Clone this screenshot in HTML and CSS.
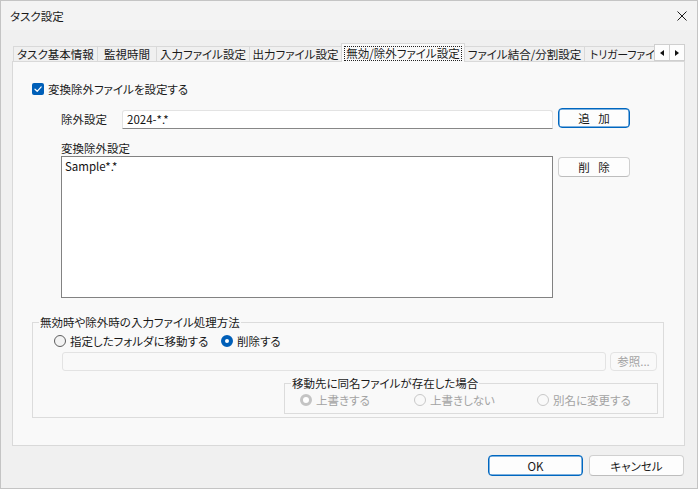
FILE: index.html
```html
<!DOCTYPE html>
<html lang="ja">
  <head>
    <meta charset="UTF-8" />
    <title>タスク設定</title>
    <link rel="stylesheet" href="styles.css">
  </head>
  <body>
    <div class="window">
      <div class="titlebar">
        <span class="title">タスク設定</span>
        <svg class="close" viewBox="0 0 10 10" width="10" height="10">
          <path d="M0.5 0.5 L9.5 9.5 M9.5 0.5 L0.5 9.5" stroke="#1a1a1a" stroke-width="1" fill="none" />
        </svg>
      </div>
      <div class="content">
        <div class="tabs">
          <div class="tabstrip">
            <div class="tab" style="width: 85px">タスク基本情報</div>
            <div class="tab" style="width: 60px">監視時間</div>
            <div class="tab" style="width: 94px">入力ファイル設定</div>
            <div class="tab" style="width: 93px">出力ファイル設定</div>
            <div class="tab active" style="width: 124px"><span class="focus">無効/除外ファイル設定</span></div>
            <div class="tab" style="width: 121px">ファイル結合/分割設定</div>
            <div class="tab last">トリガーファイ</div>
          </div>
          <div class="tab-scroll">
            <span class="arrow">
              <svg viewBox="0 0 4 6" width="4" height="6"><path d="M4 0 L0 3 L4 6 Z" fill="#111" /></svg>
            </span>
            <span class="arrow">
              <svg viewBox="0 0 4 6" width="4" height="6"><path d="M0 0 L4 3 L0 6 Z" fill="#111" /></svg>
            </span>
          </div>
        </div>

        <div class="panel">
          <label class="check-row">
            <span class="checkbox">
              <svg viewBox="0 0 12 12" width="12" height="12">
                <path d="M3 6.2 L5.2 8.3 L9.2 3.9" stroke="#fff" stroke-width="1.2" fill="none" stroke-linecap="round" stroke-linejoin="round" />
              </svg>
            </span>
            変換除外ファイルを設定する
          </label>

          <div class="indent">
            <div class="field-row">
              <span class="field-label">除外設定</span>
              <div class="textbox">2024-*.*</div>
              <button type="button" class="btn default side">追&nbsp;加</button>
            </div>

            <div class="list-label">変換除外設定</div>
            <div class="list-row">
              <div class="listbox">Sample*.*</div>
              <button type="button" class="btn side del">削&nbsp;除</button>
            </div>
          </div>

          <fieldset class="group outer">
            <legend>無効時や除外時の入力ファイル処理方法</legend>
            <div class="radio-row">
              <span class="radio-item first"><span class="radio"></span>指定したフォルダに移動する</span>
              <span class="radio-item"><span class="radio checked"></span>削除する</span>
            </div>
            <div class="folder-row">
              <div class="textbox disabled"></div>
              <button type="button" class="btn browse" disabled>参照...</button>
            </div>
            <fieldset class="group inner">
              <legend>移動先に同名ファイルが存在した場合</legend>
              <div class="radio-row small">
                <span class="radio-item w1 off"><span class="radio checked off"></span>上書きする</span>
                <span class="radio-item w2 off"><span class="radio off"></span>上書きしない</span>
                <span class="radio-item off"><span class="radio off"></span>別名に変更する</span>
              </div>
            </fieldset>
          </fieldset>
        </div>

        <div class="footer">
          <button type="button" class="btn default wide">OK</button>
          <button type="button" class="btn wide">キャンセル</button>
        </div>
      </div>
    </div>
  </body>
</html>
```

FILE: styles.css
```css
:root {
  --accent: #005fb8;
  --line: #d9d9d9;
  --panel: #f9f9f9;
  --disabled: #a3a3a3;
}

* {
  box-sizing: border-box;
}

body {
  margin: 0;
  font-family: "Noto Sans CJK JP", "Noto Sans", sans-serif;
  font-size: 11.5px;
  font-feature-settings: "palt";
  color: #1a1a1a;
}

.window {
  width: 698px;
  height: 489px;
  border: 1px solid #c4c4c4;
  background: #f0f0f0;
  display: flex;
  flex-direction: column;
}

.titlebar {
  height: 29px;
  background: #f3f3f3;
  display: flex;
  align-items: center;
  padding: 0 10px 0 9px;
}

.title {
  flex: 1;
  line-height: 16px;
}

.close {
  display: block;
  margin-top: 1px;
}

.content {
  padding: 13px 12px 0 11px;
}

/* タブ */
.tabs {
  display: flex;
  align-items: flex-end;
  height: 18px;
  padding-left: 1px;
}

.tabstrip {
  width: 641px;
  display: flex;
  align-items: flex-end;
  overflow: hidden;
  height: 19px;
  align-self: flex-start;
}

.tab {
  flex: none;
  height: 16px;
  line-height: 15px;
  text-align: center;
  white-space: nowrap;
  border: 1px solid var(--line);
  border-bottom: none;
  margin-right: -1px;
  background: #f0f0f0;
  overflow: hidden;
}

.tab.last {
  flex: 1;
  text-align: left;
  padding-left: 5px;
  border-right: none;
  font-size: 11px;
  letter-spacing: -0.2px;
}

.tab.active {
  height: 19px;
  background: var(--panel);
  position: relative;
  z-index: 2;
  padding: 2px 2px 0;
  line-height: 14px;
}

.focus {
  display: block;
  border: 1px dotted #222;
  height: 15px;
  line-height: 13px;
}

.tab-scroll {
  width: 31px;
  height: 17px;
  display: flex;
  border: 1px solid #cfcfcf;
  background: #fdfdfd;
}

.arrow {
  flex: 1;
  display: flex;
  align-items: center;
  justify-content: center;
}

.arrow + .arrow {
  border-left: 1px solid #cfcfcf;
}

.arrow svg {
  display: block;
}

/* パネル */
.panel {
  height: 385px;
  border: 1px solid var(--line);
  background: var(--panel);
  padding-left: 19px;
  position: relative;
  z-index: 1;
}

.check-row {
  display: flex;
  align-items: center;
  gap: 4px;
  margin-top: 19px;
  line-height: 16px;
  height: 16px;
}

.checkbox {
  width: 12px;
  height: 12px;
  border-radius: 2px;
  background: var(--accent);
  display: block;
}

.checkbox svg {
  display: block;
}

.indent {
  margin-left: 29px;
}

.field-row {
  display: flex;
  align-items: flex-start;
  margin-top: 11px;
}

.field-label {
  width: 61px;
  margin-top: 2px;
  line-height: 19px;
}

.textbox {
  width: 431px;
  height: 19px;
  margin-top: 2px;
  background: #fff;
  border: 1px solid #e3e3e3;
  border-bottom-color: #878787;
  border-radius: 3px 3px 0 0;
  padding: 0 4px;
  line-height: 17px;
  color: #111;
}

.btn {
  font: inherit;
  font-feature-settings: "palt";
  color: #1a1a1a;
  background: #fdfdfd;
  border: 1px solid #d0d0d0;
  border-bottom-color: #bdbdbd;
  border-radius: 4px;
  padding: 0;
  height: 20px;
  line-height: 17px;
}

.btn.default {
  border: 1px solid #0067c0;
  box-shadow: inset 0 0 0 0.5px #0067c0;
}

.side {
  width: 72px;
  margin-left: 5px;
  letter-spacing: 3px;
  padding-left: 3px;
}

.del {
  margin-top: 1px;
}

.list-label {
  margin-top: 11px;
  line-height: 16px;
}

.list-row {
  display: flex;
  align-items: flex-start;
}

.listbox {
  width: 492px;
  height: 142px;
  background: #fff;
  border: 1px solid #828282;
  padding: 2px 3px;
  line-height: 15px;
  color: #111;
}

/* グループ */
.group {
  border: 1px solid #dcdcdc;
  margin: 0;
  padding: 0;
  min-width: 0;
}

.group legend {
  padding: 0 1px;
  margin-left: 6px;
  line-height: 14px;
}

.outer {
  width: 632px;
  margin-top: 17px;
}

.radio-row {
  display: flex;
  align-items: center;
  margin-top: 4px;
  padding-left: 21px;
  line-height: 16px;
  height: 16px;
}

.radio-item {
  display: flex;
  align-items: center;
  gap: 4px;
  white-space: nowrap;
}

.radio-item.first {
  width: 167px;
}

.radio {
  width: 12px;
  height: 12px;
  border-radius: 50%;
  border: 1px solid #5f5f5f;
  background: #f3f3f3;
  display: block;
  flex: none;
}

.radio.checked {
  border: 4px solid var(--accent);
  background: #fff;
}

.radio.off {
  border-color: #c8c8c8;
  background: var(--panel);
}

.radio.checked.off {
  border: 3.5px solid #c4c4c4;
  background: #fff;
}

.radio-item.off {
  color: var(--disabled);
}

.folder-row {
  display: flex;
  margin-top: 3px;
  margin-left: 29px;
}

.textbox.disabled {
  width: 544px;
  margin-top: 0;
  background: var(--panel);
  border: 1px solid #e3e3e3;
  border-radius: 3px;
}

.browse {
  width: 47px;
  height: 19px;
  margin-left: 4px;
  color: var(--disabled);
  border-color: #e3e3e3;
  background: var(--panel);
}

.inner {
  width: 374px;
  margin: 5px 0 3px 251px;
  padding-bottom: 5px;
}

.radio-row.small {
  margin-top: 2px;
  padding-left: 15px;
}

.w1 {
  width: 114px;
}

.w2 {
  width: 123px;
}

/* 下のボタン */
.footer {
  display: flex;
  justify-content: flex-end;
  gap: 6px;
  margin-top: 9px;
  padding-right: 1px;
}

.wide {
  width: 95px;
  height: 21px;
  line-height: 18px;
}
```
